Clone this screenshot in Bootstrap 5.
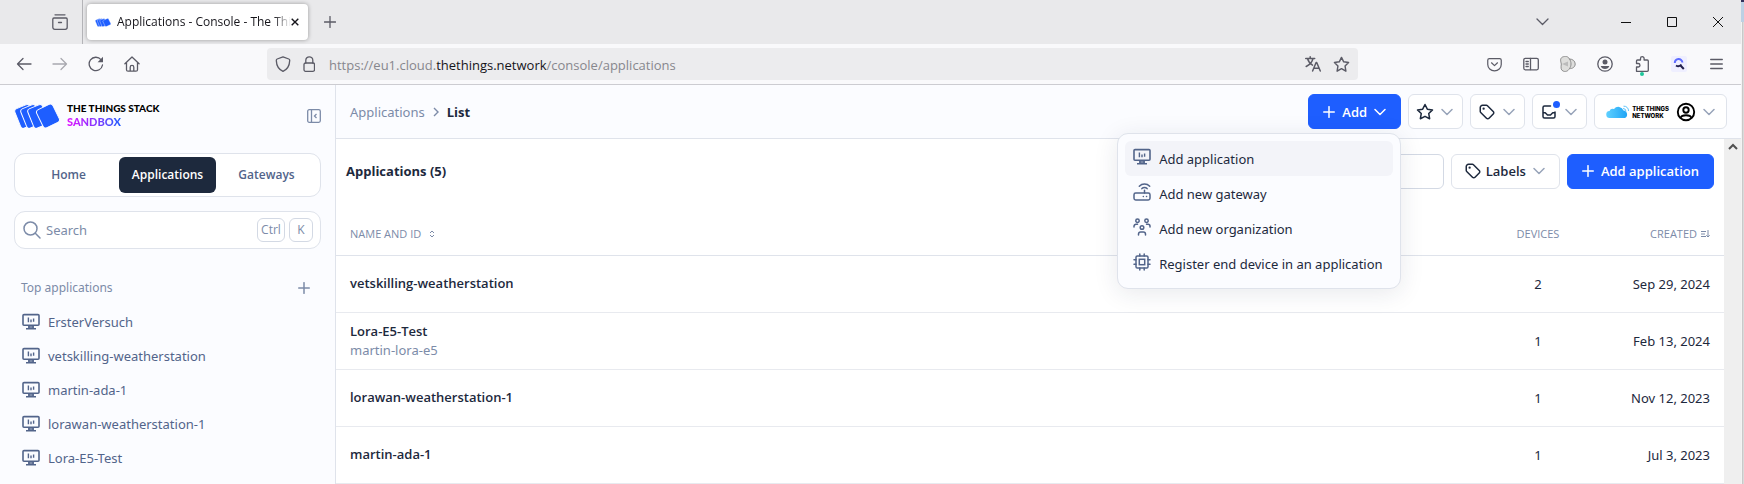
<!DOCTYPE html>
<html lang="en">
<head>
<meta charset="utf-8">
<meta name="viewport" content="width=device-width, initial-scale=1">
<title>Applications - Console - The Things Network</title>
<link href="https://cdn.jsdelivr.net/npm/bootstrap@5.3.0/dist/css/bootstrap.min.css" rel="stylesheet">
<style>
:root{--ink:#1d293d;--muted:#7c8ba8;--slate:#52648a;--line:#dfe3eb;--brand:#1e5eff;--panel:#fbfcff}
body{font:13px/20px "Noto Sans","Open Sans",sans-serif;color:var(--ink);background:#fff;min-height:100vh}
button{font:inherit;color:inherit}
a{color:inherit;text-decoration:none}
svg{display:block;flex:none}
.ln{fill:none;stroke:currentColor;stroke-width:2;stroke-linecap:round;stroke-linejoin:round}
.fx{fill:none;stroke:currentColor;stroke-width:1.3;stroke-linecap:round;stroke-linejoin:round;color:#5b5b66}
.bare{border:0;background:none;padding:0;display:flex;align-items:center;justify-content:center}
.desktop-edge{width:3px;background:linear-gradient(90deg,#f3f3f3 1px,#c9c9c9 1px,#c9c9c9 2px,#dadada 2px)}
.desktop-edge i{display:block;height:22px;background:#bcd0e4;border-top:2px solid #33305c}

/* browser chrome */
.tabstrip{height:44px;background:#e9e9eb;color:#15141a}
.firefox-view{width:83px;border-right:1px solid #b4b4b8;padding-right:14px}
.page-tab{width:221px;height:36px;background:#fff;border-radius:4px;box-shadow:0 0 4px rgba(0,0,0,.35);margin-left:4px;padding:0 12px 0 8px}
.page-tab .tab-title{font:12px/20px "Open Sans",sans-serif;white-space:nowrap;margin-left:6px;-webkit-mask-image:linear-gradient(90deg,#000 90%,transparent);mask-image:linear-gradient(90deg,#000 90%,transparent)}
.winbtn{width:46px;height:44px}
.tabs-menu{margin-right:38px}
.toolbar{height:41px;background:#f9f9fb;border-bottom:1px solid #ccccd1}
.toolbar .bare{width:36px;height:36px}
.nav-tools{padding-left:6px}
.ext-tools{padding-right:7px;margin-left:118px;gap:1px}
.urlbar{height:32px;background:#ececee;border-radius:4px;margin-left:117px;font:13px/20px "Open Sans",sans-serif;color:#87878d;padding:0 8px}
.urlbar b{font-weight:400;color:#15141a}
.url-text{padding:2px 0 0 6px}

/* sidebar */
.side{width:336px;background:var(--panel);border-right:1px solid var(--line);padding:17px 14px 0}
.brand-name{font:900 10px/13px "Lato",sans-serif;color:#000;margin-left:7px}
.brand-name span{font-size:11px;background:linear-gradient(90deg,#e015ff,#7a3cff 60%,var(--brand));-webkit-background-clip:text;background-clip:text;color:transparent}
.seg{height:44px;border:1px solid var(--line);border-radius:11px;background:#fff;padding:3px;margin-top:24px;font:600 12px/20px "Open Sans",sans-serif;color:var(--slate)}
.seg a{flex:1;height:36px;border-radius:6px}
.seg a.on{background:var(--ink);color:#fff;flex:0 0 97px}
.finder{height:38px;border:1px solid var(--line);border-radius:11px;background:#fff;margin-top:14px;padding:0 7px;color:var(--muted)}
.finder input{border:0;outline:0;background:none;min-width:0;padding:0;color:inherit}
.finder input::placeholder{color:var(--muted)}
.finder kbd{background:#fff;border:1px solid #d3d9e4;border-radius:6px;color:var(--muted);font:12px/22px "Open Sans",sans-serif;height:24px;padding:0;text-align:center;width:24px}
.finder kbd.wide{width:28px}
.side-head{margin-top:29px;padding:0 11px 0 7px;font-size:12px;color:var(--muted)}
.side-list{margin-top:7px}
.side-list a{height:34px;padding-left:8px;gap:8px;color:var(--slate)}

/* main */
.topbar{height:54px;background:var(--panel);border-bottom:1px solid var(--line);padding:0 14px}
.crumbs{color:var(--muted);gap:7px}
.crumbs strong,.listhead h1,.tool,.apps tbody th{font-family:"Open Sans",sans-serif}
.crumbs strong{color:var(--ink);font-weight:700}
.tool{height:35px;border:1px solid var(--line);border-radius:6px;background:#fff;padding:0 14px;gap:7px;display:flex;align-items:center;font-weight:600;white-space:nowrap}
.tool.icon-tool{padding:0 9px 0 7px}
.tool.user-tool{padding:0 11px}
.tool.label-tool{padding:0 14px 0 12px}
.tool.prime{background:var(--brand);border-color:var(--brand);color:#fff}
.gap-tools{gap:7px}
.chev{color:#98a4b9}
.prime .chev{color:#fff}
.alert-dot{position:absolute;width:7px;height:7px;border-radius:50%;background:var(--brand);right:-2px;top:-2px}
.org-name{font:800 6px/7px "Inter",sans-serif;color:#000;text-align:left;margin-left:2px}
.add-menu{display:block;position:absolute;top:39px;right:0;width:284px;padding:7px;border:1px solid var(--line);border-radius:11px;background:var(--panel);box-shadow:0 4px 24px rgba(30,40,70,.1);font-size:13px}
.add-menu a{display:flex;gap:8px;height:35px;padding:8px;border-radius:6px;color:var(--ink);font-size:13px;line-height:20px;white-space:nowrap}
.add-menu a.on{background:#f3f4f9}
.add-menu svg{color:var(--slate);margin-top:-1px}
.listhead{height:64px;padding:0 10px}
.listhead h1{font-size:13px;line-height:20px;font-weight:700;margin:0}
.listhead input{width:280px;height:35px;border:1px solid #d3d9e4;border-radius:6px;padding:0 10px}
.apps{--bs-table-bg:transparent;margin:0;color:var(--ink);table-layout:fixed}
.apps th,.apps td{padding:0 14px;vertical-align:middle;border-color:#e8eaef;color:var(--ink)}
.apps thead th{height:52px;font:400 11px/20px "Open Sans",sans-serif;color:var(--muted);padding-top:10px;border-color:var(--line)}
.apps tbody tr{height:57px}
.apps tbody th{font-weight:600;line-height:19px}
.apps small{display:block;font:13px/19px "Noto Sans",sans-serif;color:var(--muted)}
.col-dev{width:116px}.col-cre{width:128px}
.track{width:17px;background:#efefef}
</style>
</head>
<body class="d-flex">
<svg width="0" height="0" class="position-absolute" aria-hidden="true">
<defs>
<symbol id="cards" viewBox="0 0 46 24"><g fill="#1e5eff" stroke="#fbfcff" stroke-width="1"><rect x="3" y="2" width="16" height="21" rx="3" transform="rotate(-22 11 12)"/><rect x="9" y="2" width="16" height="21" rx="3" transform="rotate(-22 17 12)"/><rect x="16" y="2" width="16" height="21" rx="3" transform="rotate(-22 24 12)"/><rect x="25" y="2" width="18" height="20" rx="3" transform="rotate(-26 34 12)"/></g></symbol>
<symbol id="app" viewBox="0 0 18 18"><g fill="none" stroke="currentColor" stroke-width="1.6" stroke-linejoin="round"><rect x="1" y="1.6" width="16" height="10.6" rx="1"/><path d="M7 12.5v3M11 12.5v3M4 15.8h10M6 14h6" stroke-width="1.4"/><path d="M6.4 4.4v4.8M9 6.6v2.6M11.6 5.6v3.2" stroke-width="1.4"/></g></symbol>
<symbol id="plus" viewBox="0 0 12 12"><path d="M6 .7v10.600M.7 6h10.600" fill="none" stroke="currentColor" stroke-width="1.500" stroke-linecap="round"/></symbol>
<symbol id="chev" viewBox="0 0 12 12"><path d="M1 3.5l5 5 5-5" fill="none" stroke="currentColor" stroke-width="1.5" stroke-linecap="round" stroke-linejoin="round"/></symbol>
<symbol id="star" viewBox="0 0 24 24"><path class="ln" d="M12 17.800l-6.200 3.200 1.200-6.900-5-4.900 6.900-1L12 2l3.100 6.200 6.900 1-5 4.900 1.200 6.900z"/></symbol>
<symbol id="tag" viewBox="0 0 24 24"><circle cx="7.500" cy="7.500" r="1.500" fill="currentColor"/><path class="ln" d="M3 6v5.200a2 2 0 0 0 .6 1.400l7.700 7.700a2.400 2.400 0 0 0 3.400 0l5.600-5.600a2.400 2.400 0 0 0 0-3.400l-7.700-7.700a2 2 0 0 0-1.400-.6H6a3 3 0 0 0-3 3z"/></symbol>
</defs>
</svg>

<div class="flex-grow-1 d-flex flex-column">
  <header>
    <div class="tabstrip d-flex align-items-center">
      <div class="firefox-view h-100 d-flex align-items-center justify-content-end flex-shrink-0">
        <button class="bare" aria-label="Firefox View"><svg width="16" height="16" viewBox="0 0 16 16" class="fx"><path d="M3 .8h10"/><path d="M2 4h12a1.300 1.300 0 0 1 1.200 1.300v8a2 2 0 0 1-2 2H2.800a2 2 0 0 1-2-2v-8A1.300 1.300 0 0 1 2 4zM6.500 8.500h3"/></svg></button>
      </div>
      <div class="page-tab d-flex align-items-center">
        <svg width="16" height="9" viewBox="0 0 46 24"><use href="#cards"/></svg>
        <span class="tab-title">Applications - Console - The Thi</span>
        <button class="bare ms-auto" aria-label="Close tab"><svg width="8" height="8" viewBox="0 0 8 8"><path d="M.7.7l6.600 6.600M7.300.7L.7 7.300" stroke="#15141a" stroke-width="1.400"/></svg></button>
      </div>
      <button class="bare ms-3" aria-label="New tab"><svg width="12" height="12" viewBox="0 0 12 12" class="fx"><path d="M6 .5v11M.5 6h11"/></svg></button>
      <button class="bare winbtn tabs-menu ms-auto" aria-label="List all tabs"><svg width="13" height="8" viewBox="0 0 13 8" class="fx"><path d="M1 1l5.500 5.500L12 1"/></svg></button>
      <div class="d-flex">
        <button class="bare winbtn" aria-label="Minimize"><svg width="10" height="10"><path d="M0 5.500h10" stroke="#111"/></svg></button>
        <button class="bare winbtn" aria-label="Maximize"><svg width="10" height="10"><path d="M.5.5h9v9h-9z" fill="none" stroke="#111"/></svg></button>
        <button class="bare winbtn" aria-label="Close"><svg width="10" height="10"><path d="M0 0l10 10M10 0L0 10" stroke="#111"/></svg></button>
      </div>
    </div>
    <div class="toolbar d-flex align-items-center">
      <nav class="nav-tools d-flex" aria-label="History">
        <button class="bare" aria-label="Back"><svg width="16" height="16" viewBox="0 0 16 16" class="fx"><path d="M15 8H1.500M7 2.500L1.500 8 7 13.500"/></svg></button>
        <button class="bare opacity-50" aria-label="Forward"><svg width="16" height="16" viewBox="0 0 16 16" class="fx"><path d="M1 8h13.500M9 2.500L14.500 8 9 13.500"/></svg></button>
        <button class="bare" aria-label="Reload"><svg width="16" height="16" viewBox="0 0 16 16" class="fx"><path d="M14.500 9A6.700 6.700 0 1 1 13 3.600"/><path d="M15 .8v5.400H9.600z" fill="#5b5b66" stroke="none"/></svg></button>
        <button class="bare" aria-label="Home"><svg width="16" height="16" viewBox="0 0 16 16" class="fx"><path d="M.9 7.700L8 1l7.100 6.700M2.500 6.500v7.200a1.500 1.500 0 0 0 1.500 1.500h8a1.500 1.500 0 0 0 1.500-1.500V6.500M6.200 15v-3.800a1.800 1.800 0 0 1 3.600 0V15"/></svg></button>
      </nav>
      <div class="urlbar d-flex align-items-center flex-grow-1">
        <svg width="16" height="16" viewBox="0 0 16 16" class="fx"><path d="M8 .8l5.800 2.200c.7.300 1 .8.900 1.600C14.500 9.500 12 13.500 8 15.300 4 13.500 1.500 9.500 1.300 4.600c0-.8.200-1.300.9-1.600z"/></svg>
        <svg width="16" height="16" viewBox="0 0 16 16" class="fx ms-2 me-2"><rect x="5" y="7" width="10.500" height="8.300" rx="1.500"/><path d="M6.800 7V4.300a3.500 3.500 0 0 1 7 0V7"/></svg>
        <div class="url-text flex-grow-1 text-nowrap" role="textbox" aria-label="Address">https://eu1.cloud.<b>thethings.network</b>/console/applications</div>
        <button class="bare w-auto" aria-label="Translate"><svg width="16" height="16" viewBox="0 0 16 16" class="fx"><path d="M.7 2.500h9M5.200.8v1.700M8 2.500C7.200 6 4.500 8.800 1.200 10.500M2.600 2.800C3.500 6 5.300 8 7.500 9.200M7.600 15l3.500-8.500h.6L15.300 15M8.700 12.300h5.500" stroke-width="1.500"/></svg></button>
        <button class="bare w-auto ms-2 ps-1" aria-label="Bookmark"><svg width="17" height="17" viewBox="0 0 24 24" class="fx"><path stroke-width="2" d="M12 17.800l-6.200 3.700 1.200-7.400-5-4.900 6.900-1L12 2l3.100 6.200 6.900 1-5 4.900 1.200 7.400z"/></svg></button>
      </div>
      <div class="ext-tools d-flex">
        <button class="bare" aria-label="Pocket"><svg width="15" height="15" viewBox="0 0 16 16" class="fx"><path d="M2.500 1.700h11a1.700 1.700 0 0 1 1.700 1.700V8A7.200 6.700 0 0 1 .8 8V3.400a1.700 1.700 0 0 1 1.700-1.700zM4.800 6.200L8 9.200l3.200-3"/></svg></button>
        <button class="bare" aria-label="Sidebars"><svg width="16" height="16" viewBox="0 0 16 16" class="fx"><rect x=".8" y="2.300" width="14.500" height="11.500" rx="1.500"/><path d="M7.500 2.500v11M3 5.500h2.300M3 8h2.300M3 10.500h2.300"/></svg></button>
        <button class="bare" aria-label="Containers"><svg width="16" height="16" viewBox="0 0 16 16" fill="#dededc" stroke="#8d8d8d"><path d="M2.500 1C5 0 8 0 9.500 3c3 0 5.700 2 5.700 5s-3 5-5.700 4.500C8 15.500 5 16 3 15c-2.500-1-2-4-1.700-7C.6 5-.2 2.500 2.500 1z"/><path d="M9.500 3c2 3 2 7 0 9.500" fill="none"/><path d="M2 8l6-2.500v5z" fill="#bbb" stroke="none"/></svg></button>
        <button class="bare" aria-label="Account"><svg width="16" height="16" viewBox="0 0 16 16" class="fx"><circle cx="8" cy="8" r="7.200"/><circle cx="8" cy="6" r="2.500" fill="#5b5b66" stroke="none"/><path d="M3.700 10h8.600c-.5 2-2.200 3-4.300 3s-3.800-1-4.300-3z" fill="#5b5b66" stroke="none"/></svg></button>
        <button class="bare" aria-label="Extensions"><svg width="16" height="24" viewBox="0 -4 16 24" class="fx"><path d="M2.500 15.300V11h1.700a1.700 1.700 0 0 0 0-3.500H2.500V5a1 1 0 0 1 1-1h3V2.500a1.800 1.800 0 0 1 3.600 0V4h3.200a1 1 0 0 1 1 1v9.300a1 1 0 0 1-1 1z"/><circle cx="8" cy="18" r="2" fill="#1fc79a" stroke="none"/></svg></button>
        <button class="bare" aria-label="Search extension"><svg width="16" height="16" viewBox="0 0 16 16" fill="none"><rect width="16" height="16" rx="2" fill="#efefff"/><path d="M3.800 7a3.800 3.800 0 0 1 7.600-.5" stroke="#5f6dff" stroke-width="2"/><path d="M5 9.500c2 1.200 4.200.5 5.400-1M9.300 9.300l3.500 3.700" stroke="#22204d" stroke-width="2"/></svg></button>
        <button class="bare" aria-label="Menu"><svg width="13" height="12" viewBox="0 0 13 12" class="fx"><path d="M.7 1.500h11.600M.7 6h11.600M.7 10.500h11.600"/></svg></button>
      </div>
    </div>
  </header>

  <div class="d-flex flex-grow-1">
    <aside class="side flex-shrink-0">
      <div class="d-flex align-items-center">
        <svg width="46" height="24"><use href="#cards"/></svg>
        <a href="#" class="brand-name">THE THINGS STACK<br><span>SANDBOX</span></a>
        <button class="bare ms-auto" aria-label="Collapse sidebar"><svg width="14" height="14" viewBox="0 0 14 14" fill="none" stroke="#7c8ba8" stroke-width="1.300"><rect x=".7" y=".7" width="12.600" height="12.600" rx="1.500"/><path d="M4.500 1v12M9.500 5L7.500 7l2 2"/></svg></button>
      </div>
      <nav class="seg d-flex text-center">
        <a href="#" class="d-flex align-items-center justify-content-center">Home</a>
        <a href="#" class="on d-flex align-items-center justify-content-center">Applications</a>
        <a href="#" class="d-flex align-items-center justify-content-center">Gateways</a>
      </nav>
      <div class="finder d-flex align-items-center gap-1">
        <svg width="20" height="20" viewBox="0 0 20 20" fill="none" stroke="currentColor" stroke-width="1.500" stroke-linecap="round"><circle cx="8.500" cy="8.500" r="6.500"/><path d="M13.300 13.300L18 18"/></svg>
        <input type="search" class="flex-grow-1" placeholder="Search" aria-label="Search">
        <kbd class="wide">Ctrl</kbd><kbd>K</kbd>
      </div>
      <div class="side-head d-flex align-items-center justify-content-between">Top applications
        <button class="bare" aria-label="Add application"><svg width="12" height="12"><use href="#plus"/></svg></button>
      </div>
      <nav class="side-list">
        <a href="#" class="d-flex align-items-center"><svg width="18" height="18"><use href="#app"/></svg>ErsterVersuch</a>
        <a href="#" class="d-flex align-items-center"><svg width="18" height="18"><use href="#app"/></svg>vetskilling-weatherstation</a>
        <a href="#" class="d-flex align-items-center"><svg width="18" height="18"><use href="#app"/></svg>martin-ada-1</a>
        <a href="#" class="d-flex align-items-center"><svg width="18" height="18"><use href="#app"/></svg>lorawan-weatherstation-1</a>
        <a href="#" class="d-flex align-items-center"><svg width="18" height="18"><use href="#app"/></svg>Lora-E5-Test</a>
      </nav>
    </aside>

    <div class="flex-grow-1 d-flex flex-column">
      <div class="topbar d-flex align-items-center justify-content-between">
        <nav class="crumbs d-flex align-items-center" aria-label="breadcrumb"><a href="#">Applications</a>
          <svg width="8" height="10" viewBox="0 0 8 10" fill="none" stroke="currentColor" stroke-width="1.400"><path d="M2 1l4 4-4 4"/></svg><strong>List</strong></nav>
        <div class="gap-tools d-flex">
          <div class="dropdown">
            <button class="tool prime" aria-expanded="true"><svg width="12" height="12"><use href="#plus"/></svg>Add<svg class="chev" width="12" height="12"><use href="#chev"/></svg></button>
            <div class="dropdown-menu show add-menu">
              <a href="#" class="on"><svg width="18" height="18"><use href="#app"/></svg>Add application</a>
              <a href="#"><svg width="18" height="18" viewBox="0 0 18 18" fill="none" stroke="currentColor" stroke-width="1.500" stroke-linecap="round"><rect x="1" y="10" width="16" height="7" rx="1.700"/><path d="M11.500 10V7.300M8.900 5.600a3.600 3.600 0 0 1 5.200 0M6.300 3.200a7.200 7.200 0 0 1 10.400 0M10.300 13.500h.1M13.500 13.500h.1"/></svg>Add new gateway</a>
              <a href="#"><svg width="18" height="18" viewBox="0 0 18 18" fill="none" stroke="currentColor" stroke-width="1.500" stroke-linecap="round"><circle cx="4.500" cy="2.700" r="1.700"/><circle cx="13.500" cy="2.700" r="1.700"/><circle cx="9" cy="9.500" r="1.800"/><path d="M1 9V8.300a2 2 0 0 1 2-2h1.500M17 9V8.300a2 2 0 0 0-2-2h-1.500M5.500 17v-.8a2.200 2.200 0 0 1 2.200-2.200h2.600a2.200 2.200 0 0 1 2.200 2.200v.8"/></svg>Add new organization</a>
              <a href="#"><svg width="18" height="18" viewBox="0 0 18 18" fill="none" stroke="currentColor" stroke-width="1.500" stroke-linecap="round"><rect x="3" y="3" width="12" height="12" rx="1.300"/><rect x="6.300" y="6.300" width="5.400" height="5.400"/><path d="M6.800 3V1M11.200 3V1M6.800 17v-2M11.200 17v-2M3 6.800H1M3 11.200H1M17 6.800h-2M17 11.200h-2"/></svg>Register end device in an application</a>
            </div>
          </div>
          <button class="tool icon-tool" aria-label="Bookmarks"><svg width="18" height="18"><use href="#star"/></svg><svg class="chev" width="12" height="12"><use href="#chev"/></svg></button>
          <button class="tool icon-tool" aria-label="Labels"><svg width="18" height="18"><use href="#tag"/></svg><svg class="chev" width="12" height="12"><use href="#chev"/></svg></button>
          <button class="tool icon-tool" aria-label="Notifications"><span class="position-relative"><svg width="18" height="18" viewBox="0 0 24 24" class="ln"><path d="M14 4H6a2 2 0 0 0-2 2v12a2 2 0 0 0 2 2h12a2 2 0 0 0 2-2v-6M4 13h3l3 3h4l3-3h3"/></svg><i class="alert-dot"></i></span><svg class="chev" width="12" height="12"><use href="#chev"/></svg></button>
          <button class="tool user-tool" aria-label="Account">
            <span class="d-flex align-items-center"><svg width="24" height="14" viewBox="0 0 24 14"><defs><linearGradient id="sky"><stop stop-color="#5fd0ff"/><stop offset="1" stop-color="#1fa4f5"/></linearGradient></defs><path fill="url(#sky)" d="M4 13a3.500 3.500 0 0 1-.5-7A3.500 3.500 0 0 1 8 4a5.500 5.500 0 0 1 9.500 1.500A4 4 0 0 1 19 13z"/><path d="M17 3.500a3 3 0 0 1 3 3M17.500 1.200A4.500 4.500 0 0 1 22.500 6" fill="none" stroke="#5fc4fa"/></svg><span class="org-name">THE THINGS<br>NETWORK</span></span>
            <svg width="20" height="20" viewBox="0 0 20 20" fill="none" stroke="#000" stroke-width="1.900"><circle cx="10" cy="10" r="8.200"/><circle cx="10" cy="8" r="2.700"/><path d="M4.700 15.800c.6-2 2.300-2.600 5.300-2.600s4.700.6 5.300 2.600"/></svg>
            <svg class="chev" width="12" height="12"><use href="#chev"/></svg></button>
        </div>
      </div>
      <div class="d-flex flex-grow-1">
        <main class="flex-grow-1">
          <div class="listhead gap-tools d-flex align-items-center">
            <h1 class="me-auto">Applications (5)</h1>
            <input type="search" aria-label="Filter applications">
            <button class="tool label-tool"><span class="d-flex align-items-center gap-1"><svg width="18" height="18"><use href="#tag"/></svg>Labels</span><svg class="chev" width="12" height="12"><use href="#chev"/></svg></button>
            <button class="tool prime"><svg width="12" height="12"><use href="#plus"/></svg>Add application</button>
          </div>
          <table class="table apps">
            <thead><tr>
              <th scope="col"><span class="d-flex align-items-center gap-2">NAME AND ID<svg width="6" height="8" viewBox="0 0 6 8" fill="none" stroke="currentColor"><path d="M1 3l2-2 2 2M1 5l2 2 2-2"/></svg></span></th>
              <th scope="col" class="col-dev text-center">DEVICES</th>
              <th scope="col" class="col-cre"><span class="d-flex align-items-center justify-content-end gap-1">CREATED<svg width="9" height="8" viewBox="0 0 9 8" fill="none" stroke="currentColor"><path d="M0 1.500h5M0 4h4M0 6.500h5M7 0v7M5.300 5.300L7 7l1.700-1.700"/></svg></span></th>
            </tr></thead>
            <tbody>
              <tr><th scope="row">vetskilling-weatherstation</th><td class="text-center">2</td><td class="text-end">Sep 29, 2024</td></tr>
              <tr><th scope="row">Lora-E5-Test<small>martin-lora-e5</small></th><td class="text-center">1</td><td class="text-end">Feb 13, 2024</td></tr>
              <tr><th scope="row">lorawan-weatherstation-1</th><td class="text-center">1</td><td class="text-end">Nov 12, 2023</td></tr>
              <tr><th scope="row">martin-ada-1</th><td class="text-center">1</td><td class="text-end">Jul 3, 2023</td></tr>
            </tbody>
          </table>
        </main>
        <div class="track flex-shrink-0 d-flex justify-content-center pt-1"><svg width="10" height="8" viewBox="0 0 10 8" fill="none" stroke="#505050" stroke-width="2"><path d="M1 6l4-4 4 4"/></svg></div>
      </div>
    </div>
  </div>
</div>
<div class="desktop-edge flex-shrink-0"><i></i></div>
<script src="https://cdn.jsdelivr.net/npm/bootstrap@5.3.0/dist/js/bootstrap.bundle.min.js"></script>
</body>
</html>
